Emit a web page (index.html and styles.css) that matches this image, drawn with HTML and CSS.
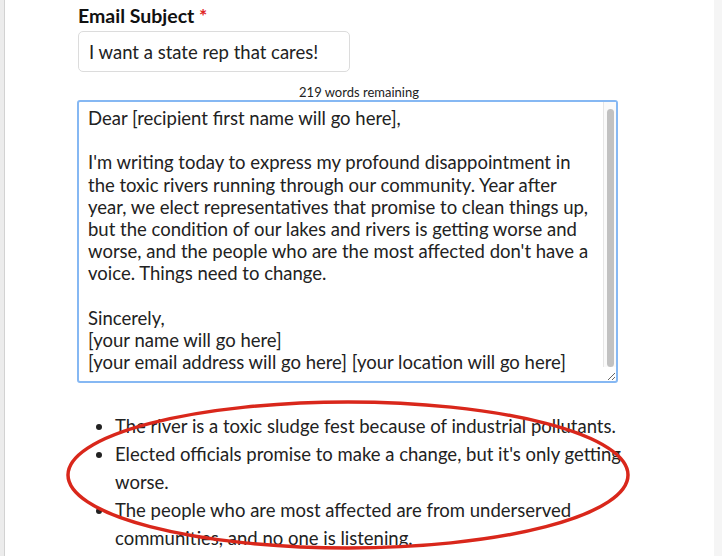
FILE: index.html
```html
<!DOCTYPE html>
<html lang="en">
<head>
    <meta charset="UTF-8">
    <meta name="viewport" content="width=device-width, initial-scale=1.0">
    <title>Email Your Rep</title>
    <link rel="stylesheet" href="styles.css">
</head>
<body>
    <div class="page">
        <div class="edge-left"></div>
        <div class="main">
            <div class="form">
                <label class="field-label" for="subject">Email Subject <span class="required">*</span></label>
                <input type="text" id="subject" class="subject-input" value="I want a state rep that cares!">

                <div class="word-count">219 words remaining</div>

                <div class="body-wrap">
                    <textarea id="body" class="email-body">Dear [recipient first name will go here],

I'm writing today to express my profound disappointment in the toxic rivers running through our community. Year after year, we elect representatives that promise to clean things up, but the condition of our lakes and rivers is getting worse and worse, and the people who are the most affected don't have a voice. Things need to change.

Sincerely,
[your name will go here]
[your email address will go here] [your location will go here]
</textarea>
                    <div class="scrollbar"><div class="thumb"></div></div>
                </div>

                <ul class="points">
                    <li>The river is a toxic sludge fest because of industrial pollutants.</li>
                    <li>Elected officials promise to make a change, but it's only getting worse.</li>
                    <li>The people who are most affected are from underserved communities, and no one is listening.</li>
                </ul>
            </div>
        </div>
        <div class="edge-right"></div>

        <!-- hand drawn highlight over the talking points -->
        <svg class="highlight" width="722" height="556" viewBox="0 0 722 556">
            <ellipse cx="348" cy="475" rx="280" ry="73" fill="none" stroke="#d9271b" stroke-width="3.5"/>
        </svg>
    </div>
</body>
</html>
```

FILE: styles.css
```css
body {
    font-family: Lato, "Open Sans", sans-serif;
    color: #222;
    background-color: #fff;
    margin: 0;
    padding: 0;
}

.page {
    position: relative;
    display: flex;
    height: 556px;
    overflow: hidden;
}

.edge-left {
    width: 4px;
    background-color: #ececec;
    border-right: 1px solid #d2d2d2;
}

.edge-right {
    width: 8px;
    background-color: #f5f5f5;
}

.main {
    flex: 1;
    padding: 5px 0 0 73px;
}

.form {
    width: 562px;
}

.field-label {
    display: block;
    font-weight: bold;
    font-size: 19.5px;
    line-height: 22px;
    margin-bottom: 4px;
    color: #111;
}

.required {
    color: #e02424;
}

.subject-input {
    box-sizing: border-box;
    display: block;
    width: 272px;
    height: 41px;
    padding: 0 10px;
    border: 1px solid #dcdcdc;
    border-radius: 5px;
    font-family: inherit;
    font-size: 18.5px;
    color: #222;
}

.word-count {
    margin-top: 12px;
    font-size: 13px;
    line-height: 16px;
    text-align: center;
}

.body-wrap {
    position: relative;
    width: 541px;
    margin-left: -1px;
}

.email-body {
    box-sizing: border-box;
    display: block;
    width: 541px;
    height: 283px;
    padding: 5px 19px 4px 9px;
    border: 2px solid #86b8f3;
    border-radius: 3px;
    outline: none;
    font-family: inherit;
    font-size: 18.5px;
    line-height: 22.2px;
    color: #222;
    overflow: hidden;
}

.scrollbar {
    position: absolute;
    top: 2px;
    right: 2px;
    bottom: 16px;
    width: 12px;
    background-color: #fafafa;
    border-left: 1px solid #e6e6e6;
}

.thumb {
    margin: 7px 2px 0 3px;
    height: 258px;
    background-color: #c1c1c1;
    border-radius: 4px;
}

.points {
    margin: 29px 0 0;
    padding-left: 37px;
    font-size: 18.5px;
    line-height: 28px;
}

.highlight {
    position: absolute;
    left: 0;
    top: 0;
    pointer-events: none;
}
```
